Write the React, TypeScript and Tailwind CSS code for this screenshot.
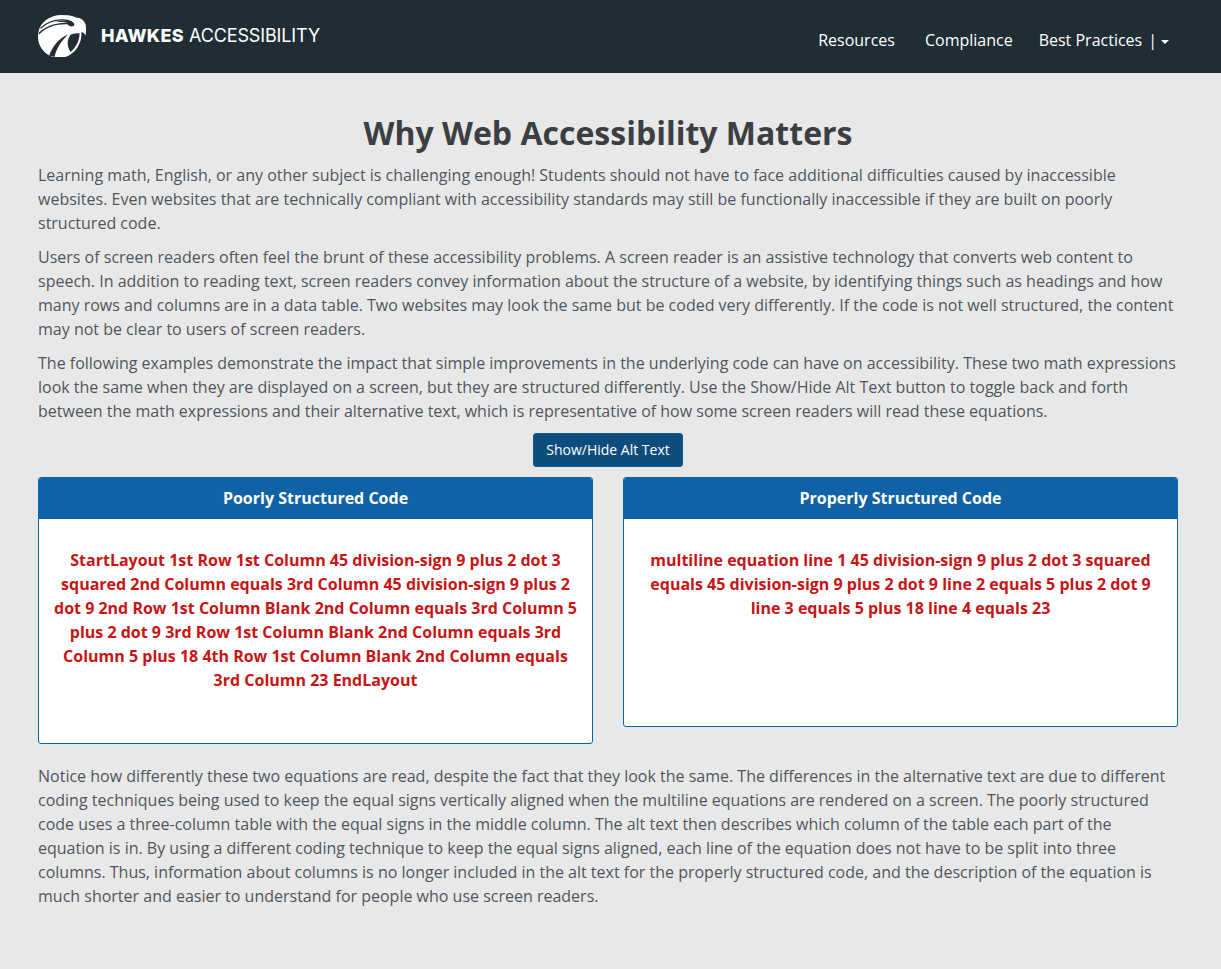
import { useState } from "react";

function HawkLogo() {
  return (
    <svg viewBox="0 0 50 44" className="h-[44px] w-[50px] shrink-0" aria-hidden="true">
      <path
        d="M2 13C6 6 13 1.500 23 1L30 1.200C34 1.500 37 3.500 41 4C45 5 48 9 48 13C47.800 15 48.500 18 47.500 21.500C46.500 19.500 45.500 18.500 43.300 18.300C44.500 29 37 40 27.500 43L15 43C6 40 0 32 0 23C0 19 0.800 16 2 13Z"
        fill="#fff"
      />
      <path
        d="M1 20.500C9 13 17 10 29.500 10.300C31.500 12.800 34.500 13 36 11.800C37.200 9.800 35.500 8 32.500 7.300C27 6.300 20 7 16 8.300C23 7.500 28 8 30 8.800C18 8.300 8 12 1 18.500Z"
        fill="#212d35"
      />
      <path d="M2.500 14.300C9 8 16 5.500 25 5.800C29 6 32 6.800 34 8.300" fill="none" stroke="#212d35" strokeWidth="1.300" />
      <path d="M30 20.500C21 24 15 32 11 41.500L16.500 43C18 35.500 22.500 27.500 30 20.500Z" fill="#212d35" />
      <path d="M41.600 19.300C38 18.800 35 19.500 32.300 21C28.800 26 28.800 32 32.500 38C38 33.500 41.500 27 41.600 19.300Z" fill="#212d35" />
    </svg>
  );
}

function Panel({ title, body, height }: { title: string; body: string; height: string }) {
  return (
    <section className={`flex-1 overflow-hidden rounded-[3px] border border-[#1062a6] bg-white ${height}`}>
      <h2 className="h-[41px] bg-[#1062a6] pt-[8px] text-center font-bold text-white">{title}</h2>
      <p className="px-[15px] pt-[29px] text-center font-bold text-[#c81414]">{body}</p>
    </section>
  );
}

export default function App() {
  const [showAlt, setShowAlt] = useState(true);
  return (
    <div className="min-h-screen bg-[#e8e8e8] font-['Open_Sans',sans-serif] text-[16px] leading-[24px] text-[#50565d]">
      <header className="flex h-[73px] justify-between bg-[#212d35] pl-[38px] text-white">
        <div className="flex pt-[14px]">
          <HawkLogo />
          <div className="flex pl-[13px] pt-[10px] font-['Inter',sans-serif] text-[18px] leading-[24px]">
            <span className="w-[88px] font-extrabold tracking-[0.3px]">HAWKES</span>
            <span className="font-normal tracking-[-0.13px]">ACCESSIBILITY</span>
          </div>
        </div>
        <nav className="flex pr-[52px] pt-[28px]">
          <a className="mr-[30px]">Resources</a>
          <a className="mr-[26px]">Compliance</a>
          <a>Best Practices</a>
          <span className="ml-[6px] mr-[4px]">|</span>
          <span className="mt-[12px] size-0 border-x-4 border-t-4 border-x-transparent border-t-white" />
        </nav>
      </header>
      <main className="w-[1216px] px-[38px] pt-[40px]">
        <h1 className="text-center text-[32px] font-bold leading-[40px] text-[#3b3f42]">Why Web Accessibility Matters</h1>
        <div className="space-y-[10px] pt-[10px]">
          <p>
            Learning math, English, or any other subject is challenging enough! Students should not have to face
            additional difficulties caused by inaccessible websites. Even websites that are technically compliant with
            accessibility standards may still be functionally inaccessible if they are built on poorly structured code.
          </p>
          <p>
            Users of screen readers often feel the brunt of these accessibility problems. A screen reader is an
            assistive technology that converts web content to speech. In addition to reading text, screen readers convey
            information about the structure of a website, by identifying things such as headings and how many rows and
            columns are in a data table. Two websites may look the same but be coded very differently. If the code is
            not well structured, the content may not be clear to users of screen readers.
          </p>
          <p>
            The following examples demonstrate the impact that simple improvements in the underlying code can have on
            accessibility. These two math expressions look the same when they are displayed on a screen, but they are
            structured differently. Use the Show/Hide Alt Text button to toggle back and forth between the math
            expressions and their alternative text, which is representative of how some screen readers will read these
            equations.
          </p>
        </div>
        <div className="flex justify-center pb-[10px] pt-[10px]">
          <button
            onClick={() => setShowAlt(!showAlt)}
            className="h-[34px] w-[150px] rounded-[3px] border border-[#10609a] bg-[#0d4d7e] text-[14px] leading-[20px] text-white"
          >
            Show/Hide Alt Text
          </button>
        </div>
        <div className="flex h-[267px] items-start gap-[30px]">
          <Panel
            title="Poorly Structured Code"
            height="h-[267px]"
            body={
              showAlt
                ? "StartLayout 1st Row 1st Column 45 division-sign 9 plus 2 dot 3 squared 2nd Column equals 3rd Column 45 division-sign 9 plus 2 dot 9 2nd Row 1st Column Blank 2nd Column equals 3rd Column 5 plus 2 dot 9 3rd Row 1st Column Blank 2nd Column equals 3rd Column 5 plus 18 4th Row 1st Column Blank 2nd Column equals 3rd Column 23 EndLayout"
                : "45 ÷ 9 + 2 · 3²"
            }
          />
          <Panel
            title="Properly Structured Code"
            height="h-[250px]"
            body={
              showAlt
                ? "multiline equation line 1 45 division-sign 9 plus 2 dot 3 squared equals 45 division-sign 9 plus 2 dot 9 line 2 equals 5 plus 2 dot 9 line 3 equals 5 plus 18 line 4 equals 23"
                : "45 ÷ 9 + 2 · 3²"
            }
          />
        </div>
        <p className="pt-[20px]">
          Notice how differently these two equations are read, despite the fact that they look the same. The differences
          in the alternative text are due to different coding techniques being used to keep the equal signs vertically
          aligned when the multiline equations are rendered on a screen. The poorly structured code uses a three-column
          table with the equal signs in the middle column. The alt text then describes which column of the table each
          part of the equation is in. By using a different coding technique to keep the equal signs aligned, each line
          of the equation does not have to be split into three columns. Thus, information about columns is no longer
          included in the alt text for the properly structured code, and the description of the equation is much shorter
          and easier to understand for people who use screen readers.
        </p>
      </main>
    </div>
  );
}
